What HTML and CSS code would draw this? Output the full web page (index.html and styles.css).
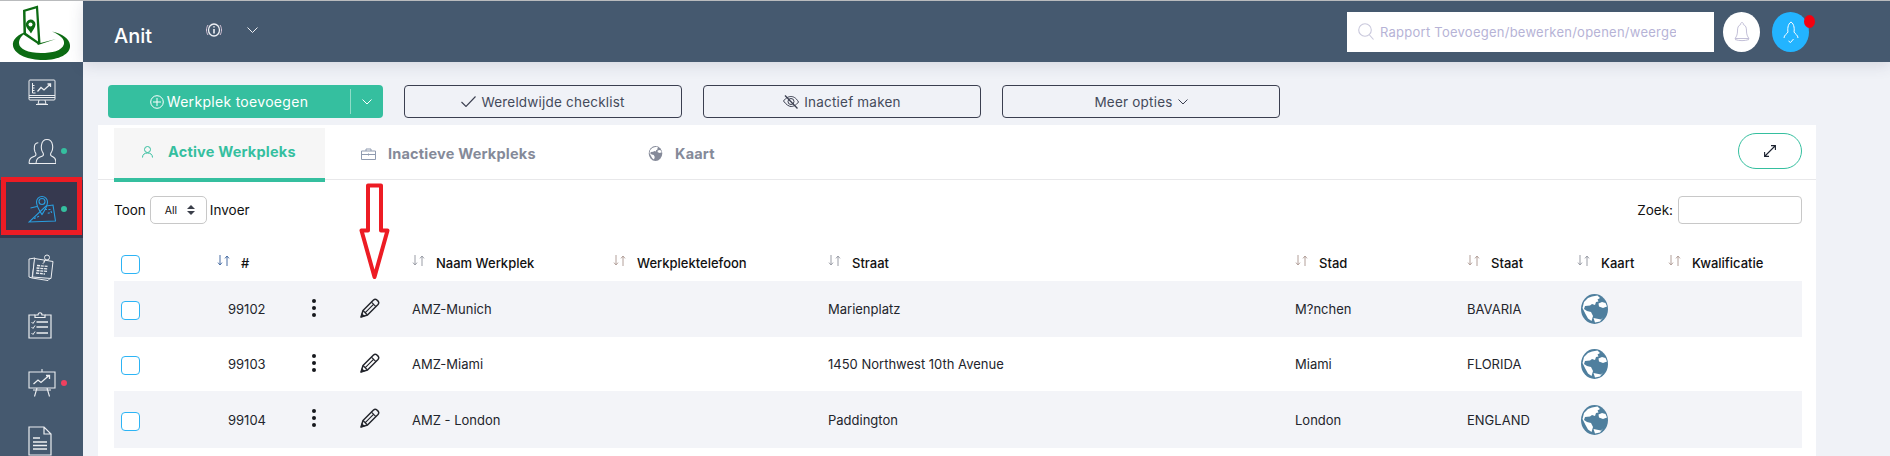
FILE: index.html
```html
<!DOCTYPE html>
<html lang="nl">

<head>
  <meta charset="UTF-8">
  <title>Werkpleks</title>
  <link rel="stylesheet" href="styles.css">
</head>

<body>
  <!-- herbruikbare iconen -->
  <svg class="defs" width="0" height="0">
    <symbol id="i-sort" viewBox="0 0 13 13">
      <path class="down" d="M3 1v10M1 8.6 3 11l2-2.4" />
      <path class="up" d="M10 12V2M8 4.4 10 2l2 2.4" />
    </symbol>
    <symbol id="i-pencil" viewBox="0 0 20 20">
      <path d="M1 19 3 12.5 13.5 2Q15 .7 16.6 1.7L18.3 3.4Q19.3 5 18 6.5L7.5 17Z" fill="none" stroke="#23252c" stroke-width="1.5" stroke-linejoin="round" />
      <path d="M11.4 4.1 15.9 8.6M3 12.5 7.5 17M5 14.8 14 5.8" fill="none" stroke="#23252c" stroke-width="1.2" />
      <path d="M.6 19.4 1.8 15 5 18.2Z" fill="#23252c" />
    </symbol>
    <symbol id="i-dots" viewBox="0 0 6 20">
      <circle cx="3" cy="3" r="2" />
      <circle cx="3" cy="10" r="2" />
      <circle cx="3" cy="17" r="2" />
    </symbol>
    <symbol id="i-globe" viewBox="0 0 27 30">
      <ellipse cx="13.5" cy="15" rx="13.5" ry="15" fill="#4f7f9e" />
      <path d="M11 2.5 16.5 1.5 19 4 16.5 5.5 17.5 7.5 15 8 14 11 11 10 9 11.5 4 12 3 15 6 17 10 18 12 22 10.5 27 7 24.5 4.5 20 1.5 14 3 8 7 4Z" fill="#fff" />
      <path d="M17.5 9.5 21 8 24.5 9 26 12.5 22 14 18 12.5ZM12.5 24 20 25.5 22 23.5 19 27.5 14 28.5Z" fill="#fff" />
    </symbol>
  </svg>

  <div class="app">
    <aside class="sidebar">
      <div class="logo">
        <svg width="83" height="61" viewBox="0 0 83 61">
          <path d="M29 30C17 33 12 39 13 45 15 54 29 59 43 59 59 59 71 53 70 44 69.500 38 63 33 52 30.500 60 34 65 38 64 43 62 50 52 52 41 52 28 52 19 48 19 42 19 37 23 33 29 30Z" fill="#0c6b13" />
          <path d="M23 9 38 4.500 40.500 42 56 38 38 44 37 42.500 23.500 33.500Z" fill="#0c6b13" />
          <path d="M25.500 10.500 36 7.500 38 40.500 26 32Z" fill="#fff" />
          <path d="M30.500 18.500a5 5 0 0 1 5 5c0 3-3 6-4.500 9-1.500-3-5-5.500-5.200-8.800a5 5 0 0 1 4.700-5.200Z" fill="#0c6b13" />
          <circle cx="30.500" cy="23.500" r="2" fill="#fff" />
        </svg>
      </div>
      <nav class="menu">
        <a class="menu-item">
          <svg width="28" height="28" viewBox="0 0 28 28" fill="none" stroke="#eceef1" stroke-width="1">
            <rect x="1" y="1" width="26" height="20" rx="1" />
            <path d="M1 16.500h26M1 18.500h26M11 21l-1 4h8l-1-4M8 25.500h12M4.500 4v10h3M4.500 6.500h2M4.500 9h2M4.500 11.500h2" />
            <path d="M9.500 12.500 13 8.500 16 11 22.500 5M19.500 5h3v3" stroke-width="1.300" />
          </svg>
        </a>
        <a class="menu-item">
          <svg width="28" height="27" viewBox="0 0 28 27" fill="none" stroke="#eceef1" stroke-width="1.100">
            <path d="M1 25.500c0-5 2-6 6-7.500 1.500-1 1-2.500 0-4-1-2-1-3.500-.5-6 .5-2.200 2-3.200 3.800-3.200" />
            <path d="M8 25.500c0-5 2.500-6 6.500-7.500 1.500-1 1-2.500 0-4-1.200-2-1.500-4-1-7 .5-3 2.500-5.500 5.500-5.500s5 2.500 5.500 5.500c.5 3 .2 5-1 7-1 1.500-1.500 3 0 4 3 1.500 4.500 2.500 4.500 7.500Z" />
            <path d="M1 25.500h7" />
          </svg>
          <i class="dot dot-green"></i>
        </a>
        <a class="menu-item menu-item-active">
          <svg width="28" height="28" viewBox="0 0 28 28" fill="none" stroke="#2a9fe0" stroke-width="1.100">
            <path d="M2.500 13 9 11.500M18 11 25 10 27.500 26 1 27Z" />
            <path d="M14 19.500C11 15 8.500 11.500 8.500 7a5.500 5.500 0 0 1 11 0c0 4.500-2.500 8-5.500 12.500Z" />
            <circle cx="14" cy="6.500" r="3" />
            <path d="M6 23.500c2-.5 4-2 6-2.500M17 14.500h5.500l1 3-5 1" stroke-dasharray="2 1.500" />
          </svg>
          <i class="dot dot-green"></i>
        </a>
        <a class="menu-item">
          <svg width="28" height="27" viewBox="0 0 28 27" fill="none" stroke="#eceef1" stroke-width="1">
            <path d="M1 5 7 4 4 24 1 23ZM4 24l16 2.500 2-2" />
            <path d="M6.500 4.500 25 7.500 23 24.500 4.500 23Z" fill="#45596f" />
            <circle cx="19" cy="3.500" r="2.500" />
            <path d="M17 6 15 10M9 11.500l11 1M8.500 14l11.500 1M8.500 16.500l11 1M8 19l9 1" stroke-width="1.300" stroke-dasharray="3 .8" />
          </svg>
        </a>
        <a class="menu-item">
          <svg width="24" height="28" viewBox="0 0 24 28" fill="none" stroke="#eceef1" stroke-width="1.200">
            <path d="M7 4H1v23h22V4h-6" />
            <path d="M7 6.500V4h3c0-3 4-3 4 0h3v2.500Z" />
            <path d="M8.500 11H20M8.500 16H20M8.500 22H20" stroke-width="1.400" />
            <path d="M3.500 11 5 12.500 7 9.500M3.500 16 5 17.500 7 14.500M3.500 22 5 23.500 7 20.500" stroke-width="1" />
          </svg>
        </a>
        <a class="menu-item">
          <svg width="28" height="28" viewBox="0 0 28 28" fill="none" stroke="#eceef1" stroke-width="1.100">
            <path d="M14 0v3M1 3h26v16H1ZM9 19 6.500 27.500M19 19l2.500 8.500M5 21h18" />
            <path d="M5.500 15 10 11l3 2.500 8-7M18 6.500h3.500V10" stroke-width="1.300" />
          </svg>
          <i class="dot dot-red"></i>
        </a>
        <a class="menu-item">
          <svg width="24" height="30" viewBox="0 0 24 30" fill="none" stroke="#eceef1" stroke-width="1.200">
            <path d="M1 1h15l7 7v21H1ZM16 1v7h7" />
            <path d="M5 12h7M5 16h14M5 19.500h14M5 23h14" stroke-width="1.400" />
          </svg>
        </a>
      </nav>
    </aside>

    <div class="content">
      <header class="topbar">
        <span class="user-name">Anit</span>
        <svg class="info-icon" width="18" height="14" viewBox="0 0 18 14" fill="none" stroke="#eef0f4" stroke-width="1">
          <ellipse cx="9" cy="7" rx="5.500" ry="6" stroke-width="1.300" />
          <path d="M3 2C1 5 1 9 3 12M15 2c2 3 2 7 0 10" stroke="#d8c6d8" />
          <path d="M9 6v4.500M9 3.300v1.300" stroke-width="1.600" />
        </svg>
        <svg class="chevron-icon" width="11" height="6" viewBox="0 0 11 6" fill="none" stroke="#eef0f4">
          <path d="M.5.500 5.500 5.500 10.500.500" />
        </svg>
        <div class="search">
          <svg width="16" height="17" viewBox="0 0 16 17" fill="none" stroke="#c9c8dc" stroke-width="1.100">
            <circle cx="7" cy="7" r="6.300" />
            <path d="M11.500 12 15.500 16.500" />
          </svg>
          <input type="text" placeholder="Rapport Toevoegen/bewerken/openen/weergeven profiel">
        </div>
        <div class="round-btn bell">
          <svg width="16" height="20" viewBox="0 0 16 20" fill="none" stroke="#c3c0d8" stroke-width="1">
            <path d="M8 .500c-1 0-1.500.8-1.300 2C4 3.500 3.500 6 3.500 9c0 3-.8 5.500-2.500 7.500h14c-1.700-2-2.500-4.500-2.500-7.500 0-3-.5-5.500-3.200-6.500C9.500 1.300 9 .500 8 .500Z" />
            <path d="M1 17.500c4 1.500 10 1.500 14 0" />
          </svg>
        </div>
        <div class="round-btn avatar">
          <svg width="16" height="22" viewBox="0 0 16 22" fill="none" stroke="#fff" stroke-width="1">
            <path d="M1 17c0-3 3-4 4-6C4.500 9 4.500 3 8 1c3.500 2 3.500 8 3 10 1 2 4 3 4 6" />
            <path d="M5.500 20 7.500 21.500 10.500 18" />
          </svg>
          <i class="avatar-badge"></i>
        </div>
      </header>

      <div class="actions">
        <div class="btn-add">
          <span class="btn-add-main">
            <svg width="14" height="14" viewBox="0 0 14 14" fill="none" stroke="#fff" stroke-width="1">
              <circle cx="7" cy="7" r="6.300" />
              <path d="M7 3v8M3 7h8" />
            </svg>
            Werkplek toevoegen
          </span>
          <span class="btn-add-arrow">
            <svg width="10" height="6" viewBox="0 0 10 6" fill="none" stroke="#fff">
              <path d="M.5.500 5 5 9.500.500" />
            </svg>
          </span>
        </div>
        <button class="btn-outline">
          <svg width="15" height="11" viewBox="0 0 15 11" fill="none" stroke="#3b3f50" stroke-width="1.100">
            <path d="M.5 6 5 10.500 14.500.500" />
          </svg>
          Wereldwijde checklist
        </button>
        <button class="btn-outline">
          <svg width="16" height="14" viewBox="0 0 16 14" fill="none" stroke="#3b3f50" stroke-width="1">
            <path d="M.5 6C3 2.500 6 1.500 8 1.500S13 2.500 15.500 7C13 10.500 10 11.500 8 11.500S3 9.500.5 6Z" />
            <circle cx="8" cy="6.500" r="3" />
            <path d="M2 .500 14.500 13.500" stroke-width="1.300" />
          </svg>
          Inactief maken
        </button>
        <button class="btn-outline">
          Meer opties
          <svg width="10" height="6" viewBox="0 0 10 6" fill="none" stroke="#3b3f50">
            <path d="M.5.500 5 5 9.500.500" />
          </svg>
        </button>
      </div>

      <section class="card">
        <div class="tabs">
          <a class="tab tab-active">
            <svg width="11" height="12" viewBox="0 0 11 12" fill="none" stroke="#35bf9f">
              <circle cx="5.500" cy="3.500" r="3" />
              <path d="M.5 11.500c0-3 2-4.500 5-4.500s5 1.500 5 4.500" />
            </svg>
            Active Werkpleks
          </a>
          <a class="tab">
            <svg width="15" height="12" viewBox="0 0 15 12" fill="none" stroke="#8f9bb0">
              <path d="M.5 3h14v8.500H.5ZM5 3V1h5v2M.5 6.500h14M7.500 5.500v2" />
            </svg>
            Inactieve Werkpleks
          </a>
          <a class="tab">
            <svg width="15" height="15" viewBox="0 0 27 30">
              <ellipse cx="13.500" cy="15" rx="13.500" ry="15" fill="#858a99" />
              <path d="M11 2.500 16.500 1.500 19 4 16.500 5.500 17.500 7.500 15 8 14 11 11 10 9 11.500 4 12 3 15 6 17 10 18 12 22 10.500 27 7 24.500 4.500 20 1.500 14 3 8 7 4Z" fill="#fff" />
              <path d="M17.500 9.500 21 8 24.500 9 26 12.500 22 14 18 12.500Z" fill="#fff" />
            </svg>
            Kaart
          </a>
          <button class="btn-expand">
            <svg width="12" height="12" viewBox="0 0 12 12" fill="none" stroke="#1c2230" stroke-width="1.100">
              <path d="M11 1 1 11M7 .6h4.400V5M.6 7v4.400H5" />
            </svg>
          </button>
        </div>

        <div class="filters">
          <div class="length">
            <span>Toon</span>
            <div class="select">
              All
              <svg width="8" height="10" viewBox="0 0 8 10" fill="#3a3f4a">
                <path d="M4 0 8 4H0ZM4 10 0 6h8Z" />
              </svg>
            </div>
            <span>Invoer</span>
          </div>
          <div class="find">
            <span>Zoek:</span>
            <input type="text">
          </div>
        </div>

        <table class="table">
          <colgroup>
            <col class="c-check">
            <col class="c-id">
            <col class="c-menu">
            <col class="c-edit">
            <col class="c-name">
            <col class="c-phone">
            <col class="c-street">
            <col class="c-city">
            <col class="c-state">
            <col class="c-map">
            <col class="c-qual">
          </colgroup>
          <thead>
            <tr>
              <th class="check"><span class="box"></span></th>
              <th><svg class="sort sort-active"><use href="#i-sort" /></svg>#</th>
              <th></th>
              <th></th>
              <th><svg class="sort"><use href="#i-sort" /></svg>Naam Werkplek</th>
              <th><svg class="sort sort-warm"><use href="#i-sort" /></svg>Werkplektelefoon</th>
              <th><svg class="sort"><use href="#i-sort" /></svg>Straat</th>
              <th><svg class="sort sort-warm"><use href="#i-sort" /></svg>Stad</th>
              <th><svg class="sort sort-warm"><use href="#i-sort" /></svg>Staat</th>
              <th><svg class="sort"><use href="#i-sort" /></svg>Kaart</th>
              <th><svg class="sort sort-warm"><use href="#i-sort" /></svg>Kwalificatie</th>
            </tr>
          </thead>
          <tbody>
            <tr>
              <td class="check"><span class="box"></span></td>
              <td class="id">99102</td>
              <td class="more"><svg class="dots"><use href="#i-dots" /></svg></td>
              <td class="edit"><svg class="pencil"><use href="#i-pencil" /></svg></td>
              <td>AMZ-Munich</td>
              <td></td>
              <td>Marienplatz</td>
              <td>M?nchen</td>
              <td>BAVARIA</td>
              <td class="globe-cell"><svg class="globe"><use href="#i-globe" /></svg></td>
              <td></td>
            </tr>
            <tr>
              <td class="check"><span class="box"></span></td>
              <td class="id">99103</td>
              <td class="more"><svg class="dots"><use href="#i-dots" /></svg></td>
              <td class="edit"><svg class="pencil"><use href="#i-pencil" /></svg></td>
              <td>AMZ-Miami</td>
              <td></td>
              <td>1450 Northwest 10th Avenue</td>
              <td>Miami</td>
              <td>FLORIDA</td>
              <td class="globe-cell"><svg class="globe"><use href="#i-globe" /></svg></td>
              <td></td>
            </tr>
            <tr>
              <td class="check"><span class="box"></span></td>
              <td class="id">99104</td>
              <td class="more"><svg class="dots"><use href="#i-dots" /></svg></td>
              <td class="edit"><svg class="pencil"><use href="#i-pencil" /></svg></td>
              <td>AMZ - London</td>
              <td></td>
              <td>Paddington</td>
              <td>London</td>
              <td>ENGLAND</td>
              <td class="globe-cell"><svg class="globe"><use href="#i-globe" /></svg></td>
              <td></td>
            </tr>
          </tbody>
        </table>
      </section>
    </div>
  </div>

  <!-- rode aanwijzingen uit de handleiding, liggen over de pagina -->
  <div class="mark-box"></div>
  <svg class="mark-arrow" width="31" height="100" viewBox="0 0 31 100">
    <path d="M9 2.500h13v45h6.500L15.500 94 2.500 47.500H9Z" fill="#fff" stroke="#ed1c24" stroke-width="4" stroke-linejoin="round" />
  </svg>
</body>

</html>
```

FILE: styles.css
```css
* {
  box-sizing: border-box;
}

html,
body {
  height: 100%;
}

body {
  margin: 0;
  overflow: hidden;
  border-top: 1px solid #b9bbbd;
  background-color: #f0f2f7;
  font-family: Inter, "Open Sans", sans-serif;
  font-size: 13px;
  color: #23252c;
}

.defs {
  display: block;
  position: absolute;
}

.app {
  display: flex;
  height: 455px;
}

/* 左侧菜单 */
.sidebar {
  flex: none;
  width: 83px;
  background-color: #45596f;
}

.logo {
  height: 61px;
  background-color: #fff;
}

.logo svg {
  display: block;
}

.menu {
  padding-top: 2px;
}

.menu-item {
  display: flex;
  position: relative;
  align-items: center;
  height: 58px;
  padding-left: 28px;
}

.menu-item-active {
  background-color: #36394f;
}

.dot {
  position: absolute;
  left: 61px;
  top: 26px;
  width: 6px;
  height: 6px;
  border-radius: 50%;
}

.dot-green {
  background-color: #35bf9f;
}

.dot-red {
  background-color: #f0405f;
}

/* 顶部 */
.content {
  flex: 1;
  min-width: 0;
}

.topbar {
  display: flex;
  position: relative;
  align-items: center;
  height: 61px;
  padding-left: 31px;
  background-color: #45596f;
  box-shadow: 0 3px 14px rgba(60, 70, 100, .16);
}

.user-name {
  width: 91px;
  margin-top: 8px;
  font-size: 20px;
  font-weight: 500;
  color: #fff;
}

.info-icon {
  margin-top: -4px;
}

.chevron-icon {
  margin-top: -4px;
  margin-left: 24px;
}

.search {
  display: flex;
  align-items: center;
  width: 367px;
  height: 40px;
  margin-left: auto;
  padding: 0 38px 0 11px;
  background-color: #fff;
}

.search input {
  flex: 1;
  min-width: 0;
  margin-left: 6px;
  padding: 0;
  border: none;
  outline: none;
  font: inherit;
  letter-spacing: .25px;
}

.search input::placeholder {
  color: #b6b3d6;
  opacity: 1;
}

.round-btn {
  display: flex;
  position: relative;
  align-items: center;
  justify-content: center;
  width: 37px;
  height: 40px;
  border-radius: 50%;
}

.bell {
  margin-left: 9px;
  background-color: #fff;
}

.avatar {
  margin-left: 12px;
  margin-right: 81px;
  background-color: #23b4ff;
}

.avatar-badge {
  position: absolute;
  top: 3px;
  right: -6px;
  width: 11px;
  height: 13px;
  border-radius: 50%;
  background-color: #f5000f;
}

/* 操作按钮 */
.actions {
  display: flex;
  gap: 21px;
  padding: 23px 0 7px 25px;
}

.btn-add {
  display: flex;
  width: 275px;
  height: 33px;
  border-radius: 4px;
  background-color: #35bf9f;
  color: #fff;
  font-size: 14px;
}

.btn-add-main {
  display: flex;
  flex: 1;
  align-items: center;
  justify-content: center;
  gap: 3px;
  letter-spacing: .3px;
}

.btn-add-arrow {
  display: flex;
  align-items: center;
  justify-content: center;
  width: 33px;
  height: 25px;
  margin-top: 4px;
  border-left: 1px solid #8fdcc8;
}

.btn-outline {
  display: flex;
  align-items: center;
  justify-content: center;
  gap: 5px;
  width: 278px;
  height: 33px;
  padding: 0;
  border: 1px solid #3b3f50;
  border-radius: 4px;
  background: none;
  font: inherit;
  font-size: 13.5px;
  color: #444a5a;
  letter-spacing: .2px;
}

/* 卡片 */
.card {
  height: 331px;
  margin-left: 15px;
  margin-right: 74px;
  background-color: #fff;
}

.tabs {
  display: flex;
  height: 55px;
  padding: 3px 14px 0 16px;
  border-bottom: 1px solid #e8e8ea;
}

.tab {
  display: flex;
  align-items: center;
  gap: 12px;
  width: 287px;
  height: 51px;
  padding-left: 36px;
  font-size: 14.5px;
  font-weight: 700;
  color: #858a99;
  letter-spacing: .2px;
}

.tab:last-of-type {
  width: auto;
}

.tab-active {
  gap: 15px;
  width: 211px;
  height: 54px;
  padding-left: 28px;
  padding-bottom: 3px;
  border-bottom: 4px solid #35bf9f;
  background-color: #f6f6f6;
  color: #35bf9f;
}

.btn-expand {
  display: flex;
  align-items: center;
  justify-content: center;
  width: 64px;
  height: 36px;
  margin-top: 5px;
  margin-left: auto;
  padding: 0;
  border: 1px solid #35bf9f;
  border-radius: 18px;
  background: none;
}

.filters {
  display: flex;
  justify-content: space-between;
  height: 47px;
  padding: 16px 14px 0 16px;
}

.length,
.find {
  display: flex;
  align-items: center;
  height: 28px;
  font-size: 13.5px;
  color: #111;
}

.select {
  display: flex;
  align-items: center;
  justify-content: space-between;
  width: 57px;
  height: 28px;
  margin: 0 3px 0 4px;
  padding: 0 11px 0 14px;
  border: 1px solid #c8c8c8;
  border-radius: 5px;
  font-size: 10.5px;
}

.find input {
  width: 124px;
  height: 28px;
  margin-left: 5px;
  border: 1px solid #c8c8c8;
  border-radius: 4px;
  outline: none;
}

/* 表格 */
.table {
  width: 1688px;
  margin-left: 16px;
  table-layout: fixed;
  border-collapse: collapse;
}

.c-check {
  width: 103px;
}

.c-id {
  width: 83px;
}

.c-menu {
  width: 45px;
}

.c-edit {
  width: 67px;
}

.c-name {
  width: 201px;
}

.c-phone {
  width: 215px;
}

.c-street {
  width: 467px;
}

.c-city {
  width: 172px;
}

.c-state {
  width: 110px;
}

.c-map {
  width: 91px;
}

.c-qual {
  width: 134px;
}

.table th {
  height: 54px;
  padding: 17px 0 0;
  text-align: left;
  font-size: 13px;
  font-weight: 500;
  color: #111;
  white-space: nowrap;
}

.table td {
  height: 56px;
  padding: 0;
  font-weight: 400;
  white-space: nowrap;
}

.table tbody tr:nth-child(odd) {
  background-color: #f3f4f8;
}

.table tbody tr:nth-child(2) td {
  height: 54px;
}

.table tbody tr:nth-child(3) td {
  height: 57px;
}

.table .check {
  padding-left: 7px;
}

.box {
  display: block;
  width: 19px;
  height: 19px;
  margin-top: 3px;
  border: 1px solid #2db4f5;
  border-radius: 4px;
  background-color: #fff;
}

.sort {
  width: 13px;
  height: 13px;
  margin-right: 11px;
  vertical-align: 1px;
  fill: none;
  stroke-width: 1;
}

.sort .down,
.sort use {
  stroke: #9a9da6;
}

.sort-active use {
  stroke: #4a6fa5;
}

.sort-warm use {
  stroke: #b3a09a;
}

.table .id {
  padding-left: 11px;
}

.table .more,
.table .edit {
  vertical-align: middle;
}

.dots {
  display: block;
  width: 6px;
  height: 20px;
  margin: -3px 0 0 11px;
  fill: #16181d;
}

.pencil {
  display: block;
  width: 20px;
  height: 20px;
  margin: -3px 0 0 15px;
}

.globe {
  display: block;
  width: 27px;
  height: 30px;
  margin-left: 4px;
}

/* 红色标注 */
.mark-box {
  position: absolute;
  left: 1px;
  top: 177px;
  width: 81px;
  height: 58px;
  border: 5px solid #ed1c24;
}

.mark-arrow {
  position: absolute;
  left: 359px;
  top: 183px;
}
```
